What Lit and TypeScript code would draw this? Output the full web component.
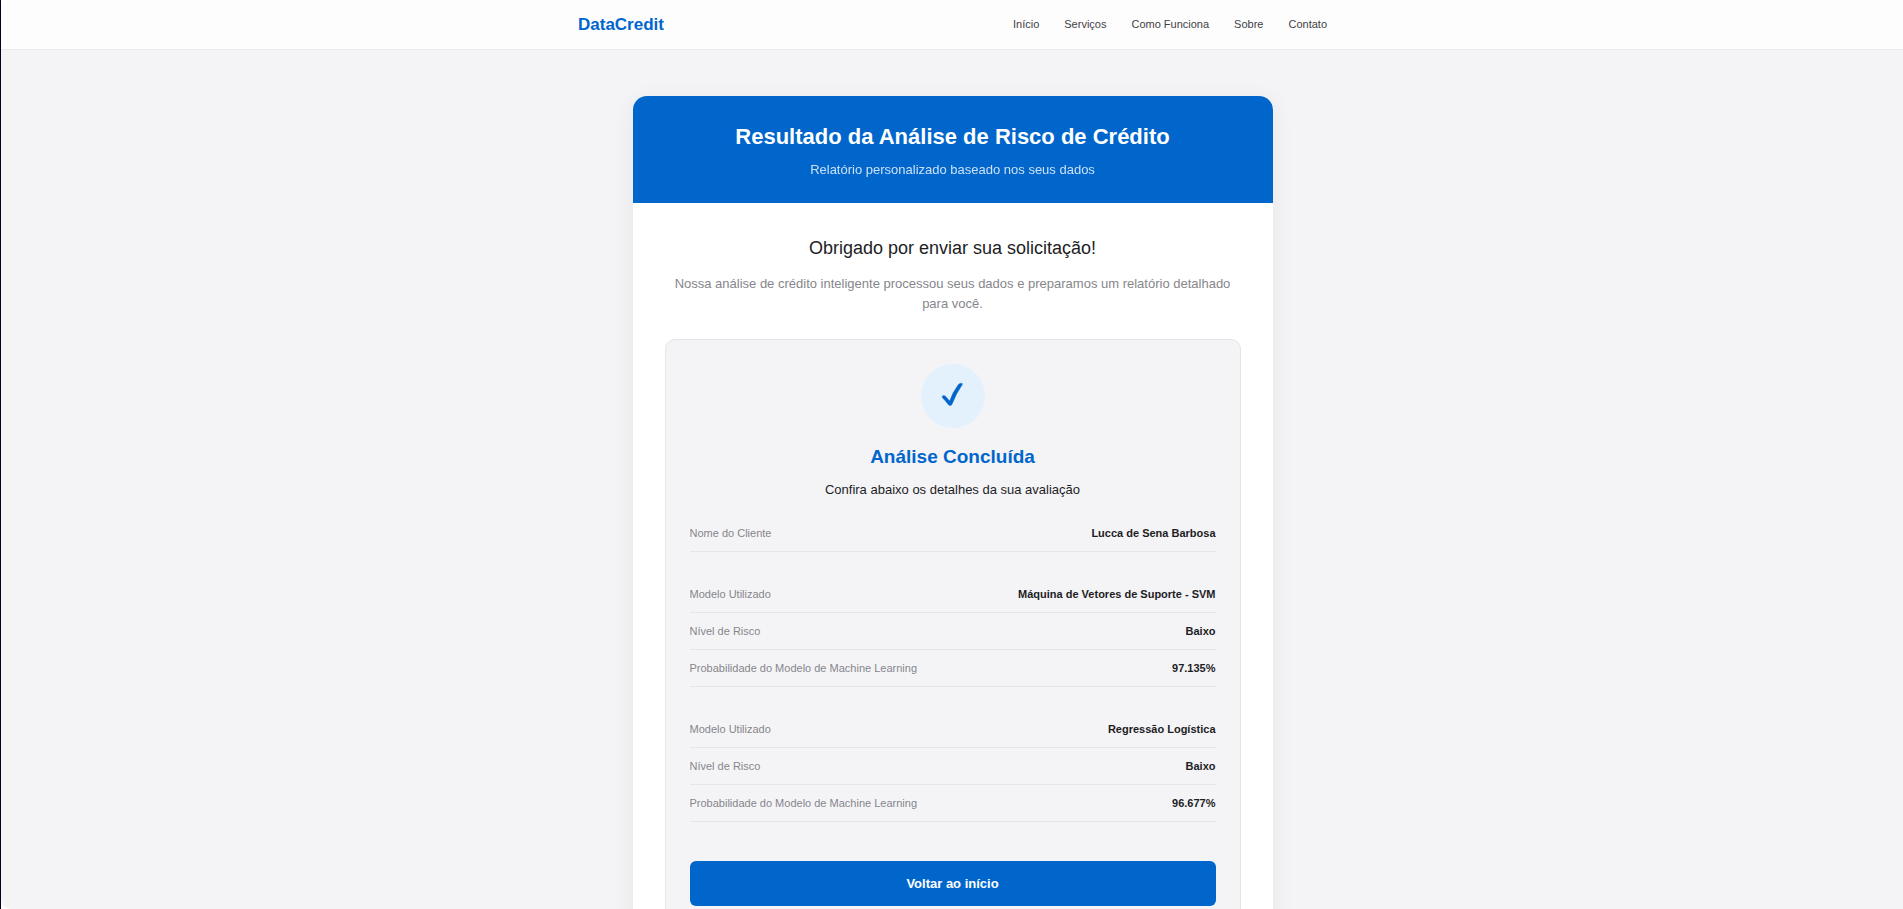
import { LitElement, html, css } from "lit";
import { customElement, property } from "lit/decorators.js";

interface Detail {
  label: string;
  value: string;
}

const NAV_LINKS = ["Início", "Serviços", "Como Funciona", "Sobre", "Contato"];

const DETAIL_GROUPS: Detail[][] = [
  [{ label: "Nome do Cliente", value: "Lucca de Sena Barbosa" }],
  [
    { label: "Modelo Utilizado", value: "Máquina de Vetores de Suporte - SVM" },
    { label: "Nível de Risco", value: "Baixo" },
    { label: "Probabilidade do Modelo de Machine Learning", value: "97.135%" },
  ],
  [
    { label: "Modelo Utilizado", value: "Regressão Logística" },
    { label: "Nível de Risco", value: "Baixo" },
    { label: "Probabilidade do Modelo de Machine Learning", value: "96.677%" },
  ],
];

@customElement("detail-group")
class DetailGroup extends LitElement {
  @property({ attribute: false }) items: Detail[] = [];

  static styles = css`
    :host {
      display: block;
    }
    .list {
      margin: 0;
    }
    .row {
      display: flex;
      justify-content: space-between;
      gap: 16px;
      padding: 10px 0;
      border-bottom: 1px solid #e6e6e8;
      font-size: 11px;
      line-height: 16px;
    }
    .label {
      color: #86868b;
    }
    .value {
      margin: 0;
      color: #1d1d1f;
      font-weight: 600;
      text-align: right;
    }
  `;

  render() {
    return html`<dl class="list">
      ${this.items.map(
        (item) => html`<div class="row">
          <dt class="label">${item.label}</dt>
          <dd class="value">${item.value}</dd>
        </div>`
      )}
    </dl>`;
  }
}

@customElement("app-root")
class AppRoot extends LitElement {
  static styles = css`
    :host {
      display: block;
      box-sizing: border-box;
      height: 100vh;
      padding-left: 1px;
      background: #03031c;
      color: #1d1d1f;
      font-family: "Liberation Sans", Arial, sans-serif;
      font-size: 13px;
      line-height: 20px;
    }
    .page {
      box-sizing: border-box;
      height: 100%;
      overflow-y: auto;
      scrollbar-width: none;
      border-radius: 10px 0 0 10px;
      background: #f4f4f7;
    }
    .topbar {
      position: sticky;
      top: 0;
      border-bottom: 1px solid #ebebed;
      border-top-left-radius: 10px;
      background: #fdfdfd;
    }
    .topbar-inner {
      display: flex;
      align-items: center;
      justify-content: space-between;
      box-sizing: border-box;
      max-width: 784px;
      margin: 0 auto;
      padding: 12px 17px 12px 18px;
    }
    .logo {
      color: #0066cc;
      font-size: 17px;
      line-height: 25px;
      font-weight: 600;
      text-decoration: none;
    }
    .nav {
      display: flex;
      gap: 25px;
      padding-bottom: 2px;
    }
    .nav-link {
      color: #424245;
      font-size: 11px;
      line-height: 16px;
      text-decoration: none;
    }
    .main {
      padding: 46px 0 46px 1px;
    }
    .card {
      max-width: 640px;
      margin: 0 auto;
      overflow: hidden;
      border-radius: 14px;
      background: #ffffff;
      box-shadow: 0 4px 24px rgba(0, 0, 0, 0.06);
      text-align: center;
    }
    .banner {
      padding: 24px 32px 23px;
      background: #0066cc;
      color: #ffffff;
    }
    .title {
      margin: 0 0 7px;
      font-size: 22px;
      line-height: 33px;
      font-weight: 600;
    }
    .subtitle {
      margin: 0;
      opacity: 0.8;
    }
    .content {
      padding: 32px;
    }
    .thanks {
      margin: 0 0 13px;
      font-size: 18px;
      line-height: 26px;
      font-weight: 400;
    }
    .intro {
      margin: 0 0 25px;
      color: #86868b;
    }
    .result {
      display: flex;
      flex-direction: column;
      padding: 24px;
      border: 1px solid #e6e6e8;
      border-radius: 10px;
      background: #f4f4f7;
    }
    .badge {
      width: 64px;
      height: 64px;
      margin: 0 auto 15px;
      border-radius: 50%;
      background: #e3f1fd;
    }
    .result-title {
      margin: 0 0 10px;
      color: #0066cc;
      font-size: 19px;
      line-height: 27px;
      font-weight: 600;
    }
    .result-text {
      margin: 0 0 15px;
    }
    .groups {
      display: flex;
      flex-direction: column;
      gap: 24px;
      margin-bottom: 39px;
    }
    .back {
      padding: 12px 24px;
      border: 0;
      border-radius: 6px;
      background: #0066cc;
      color: #ffffff;
      font: 600 13px/21px "Liberation Sans", Arial, sans-serif;
      cursor: pointer;
    }
  `;

  render() {
    return html`
      <div class="page">
        <header class="topbar">
          <div class="topbar-inner">
            <a class="logo" href="#">DataCredit</a>
            <nav class="nav">
              ${NAV_LINKS.map((text) => html`<a class="nav-link" href="#">${text}</a>`)}
            </nav>
          </div>
        </header>
        <main class="main">
          <article class="card">
            <div class="banner">
              <h1 class="title">Resultado da Análise de Risco de Crédito</h1>
              <p class="subtitle">Relatório personalizado baseado nos seus dados</p>
            </div>
            <div class="content">
              <h2 class="thanks">Obrigado por enviar sua solicitação!</h2>
              <p class="intro">
                Nossa análise de crédito inteligente processou seus dados e preparamos um relatório
                detalhado para você.
              </p>
              <section class="result">
                <svg class="badge" viewBox="0 0 64 64" aria-hidden="true">
                  <path
                    d="M21.2 32.6Q21.6 31.4 23 31.6Q24.2 31.8 25 32.8L28.6 37Q31.6 28.4 37.2 20.8Q38.4 19 40.4 19.2Q42 19.4 41.2 20.8Q35.2 29.4 31.4 39.4Q30.6 41.6 29 41.6Q28 41.6 27 40.2Q24.8 37 21.8 34.2Q21 33.4 21.2 32.6Z"
                    fill="#0066cc"
                    stroke="#0066cc"
                    stroke-width="0.4"
                  />
                </svg>
                <h3 class="result-title">Análise Concluída</h3>
                <p class="result-text">Confira abaixo os detalhes da sua avaliação</p>
                <div class="groups">
                  ${DETAIL_GROUPS.map(
                    (items) => html`<detail-group .items=${items}></detail-group>`
                  )}
                </div>
                <button class="back" type="button">Voltar ao início</button>
              </section>
            </div>
          </article>
        </main>
      </div>
    `;
  }
}
